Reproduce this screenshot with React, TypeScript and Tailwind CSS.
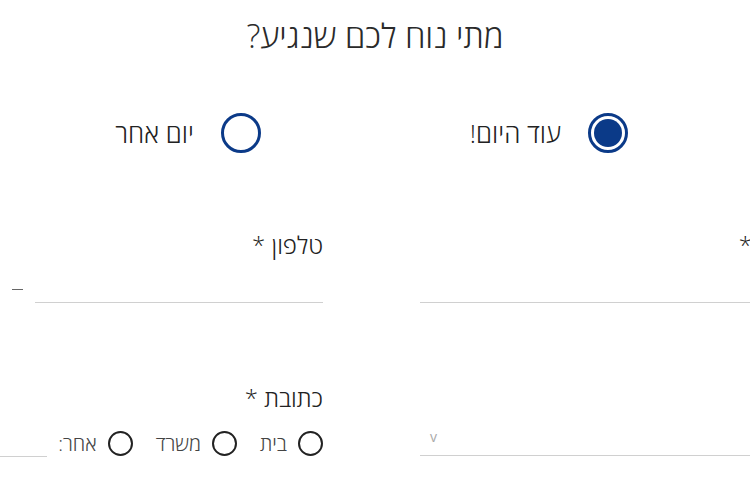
import React from "react";

const font = { fontFamily: '"Open Sans", "DejaVu Sans", sans-serif' };

function BigRadio({ checked, label }: { checked?: boolean; label: string }) {
  return (
    <label className="flex h-[40px] items-center gap-[27px]">
      <span className="flex h-[40px] w-[40px] items-center justify-center rounded-full border-[3px] border-[#0b3a88]">
        {checked && <span className="h-[28px] w-[28px] rounded-full bg-[#0b3a88]" />}
      </span>
      <span className="text-[26px] font-light leading-[40px] text-[#222]">{label}</span>
    </label>
  );
}

function SmallRadio({ label }: { label: string }) {
  return (
    <label className="flex h-[25px] items-center gap-[11px]">
      <span className="h-[25px] w-[25px] shrink-0 rounded-full border-2 border-[#222]" />
      <span className="text-[20px] font-light leading-[25px] text-[#444]">{label}</span>
    </label>
  );
}

export default function App() {
  return (
    <div className="relative h-[500px] w-[750px] overflow-hidden bg-white" style={font}>
      <h1 dir="rtl" className="pt-[15px] text-center text-[33px] font-light leading-[42px] text-[#2a2a2a]">
        מתי נוח לכם שנגיע?
      </h1>

      <div dir="rtl" className="mt-[56px] flex gap-[209px] pr-[122px]">
        <BigRadio checked label="עוד היום!" />
        <BigRadio label="יום אחר" />
      </div>

      <div dir="rtl" className="-ml-[9px] mt-[75px] grid w-[840px] grid-cols-[411px_332px] gap-x-[97px]">
        {/* שורה 1 */}
        <div>
          <div className="-mr-[4px] text-[24px] font-light leading-[34px] text-[#222]">שם מלא *</div>
          <div className="mt-[40px] h-[1px] bg-[#d0d0d0]" />
        </div>
        <div>
          <div className="text-[24px] font-light leading-[34px] text-[#222]">טלפון *</div>
          <div className="flex h-[41px] items-end">
            <div className="h-[1px] w-[288px] bg-[#d0d0d0]" />
            <div className="flex w-[44px] justify-center pb-[13px]">
              <span className="ml-[8px] h-[1px] w-[11px] bg-[#666]" />
            </div>
          </div>
        </div>

        {/* שורה 2 */}
        <div className="mt-[78px]">
          <div className="-mr-[60px] text-[24px] font-light leading-[34px] text-[#222]">עיר *</div>
          <div className="flex h-[41px] items-end justify-end border-b border-[#d0d0d0] pb-[8px] pl-[10px] text-[14px] leading-[20px] text-[#aaa]">
            v
          </div>
        </div>
        <div className="mt-[78px]">
          <div className="text-[24px] font-light leading-[34px] text-[#222]">כתובת *</div>
          <div className="mt-[16px] flex items-start">
            <div className="flex items-center gap-[23px]">
              <SmallRadio label="בית" />
              <SmallRadio label="משרד" />
              <SmallRadio label="אחר:" />
            </div>
            <div className="mr-[11px] h-[26px] flex-1 border-b border-[#d0d0d0]" />
          </div>
        </div>
      </div>
    </div>
  );
}
